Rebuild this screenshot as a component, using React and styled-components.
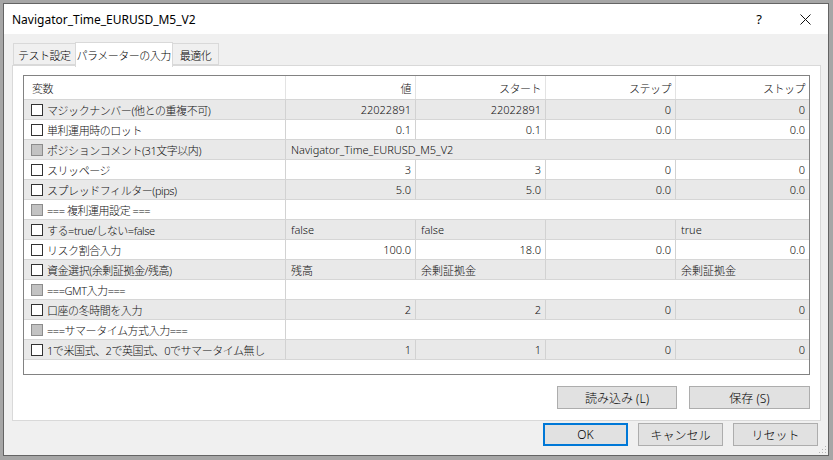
import React from 'react';
import styled, { createGlobalStyle } from 'styled-components';

const Global = createGlobalStyle`
  html, body {
    margin: 0;
    padding: 0;
    background: #a6a6a6;
  }
  body {
    padding: 3px 4px 4px 3px;
    font-family: "Noto Sans", "Noto Sans CJK JP", sans-serif;
    font-size: 12px;
    color: #000;
  }
`;

const Window = styled.div`
  position: relative;
  width: 826px;
  height: 453px;
  box-sizing: border-box;
  border: 1px solid #646464;
  background: #f0f0f0;
  display: flex;
  flex-direction: column;
`;

const TitleBar = styled.div`
  height: 30px;
  background: #fff;
  display: flex;
  align-items: center;
  padding-left: 8px;
`;

const Title = styled.div`
  flex: 1;
  font-size: 12px;
`;

const TitleButton = styled.div`
  width: 46px;
  height: 30px;
  display: flex;
  align-items: center;
  justify-content: center;
  font-size: 13px;
`;

const Body = styled.div`
  flex: 1;
  display: flex;
  flex-direction: column;
  padding: 8px 7px 10px 8px;
`;

const Tabs = styled.div`
  display: flex;
  align-items: flex-end;
  height: 23px;
  padding-left: 1px;
  position: relative;
  z-index: 1;
`;

const Tab = styled.div`
  box-sizing: border-box;
  height: ${p => (p.$active ? '25px' : '22px')};
  margin-bottom: ${p => (p.$active ? '-2px' : '0')};
  padding: 0 ${p => p.$pad}px;
  border: 1px solid #d9d9d9;
  border-bottom: ${p => (p.$active ? 'none' : '1px solid #d9d9d9')};
  margin-left: ${p => (p.$first ? '0' : '-1px')};
  background: ${p => (p.$active ? '#fff' : '#f0f0f0')};
  display: flex;
  align-items: center;
  padding-top: ${p => (p.$active ? '0' : '1px')};
  font-family: "Noto Sans CJK JP", sans-serif;
  font-weight: 300;
  font-size: 11px;
  letter-spacing: -0.5px;
  white-space: nowrap;
`;

const Panel = styled.div`
  box-sizing: border-box;
  height: 356px;
  background: #fff;
  border: 1px solid #d9d9d9;
  padding: 9px 10px 11px 10px;
  display: flex;
  flex-direction: column;
`;

const Grid = styled.div`
  box-sizing: border-box;
  height: 300px;
  border: 1px solid #828282;
  background: #fff;
`;

const Row = styled.div`
  display: grid;
  grid-template-columns: 262px 130px 130px 130px 1fr;
  height: ${p => (p.$head ? '24px' : '20px')};
  box-sizing: border-box;
  border-bottom: 1px solid #d6d6d6;
  background: ${p => (p.$shade ? '#e9e9e9' : '#fff')};
`;

const Cell = styled.div`
  box-sizing: border-box;
  display: flex;
  align-items: center;
  justify-content: ${p => (p.$right ? 'flex-end' : 'flex-start')};
  padding: 0 4px 0 5px;
  border-right: ${p => (p.$last ? 'none' : `1px solid ${p.$head ? '#e3e3e3' : '#d2d2d2'}`)};
  grid-column: ${p => p.$span || 'auto'};
  white-space: nowrap;
  overflow: hidden;
  font-family: "Noto Sans", "Noto Sans CJK JP", sans-serif;
  font-weight: 300;
  font-size: 11px;
  color: #111;
`;

const NameCell = styled(Cell)`
  padding-left: 7px;
  gap: 3px;
  letter-spacing: -0.45px;
`;

const HeadCell = styled(Cell)`
  padding-left: ${p => (p.$right ? '5px' : '8px')};
  letter-spacing: -0.5px;
`;

const Check = styled.span`
  width: 12px;
  height: 12px;
  box-sizing: border-box;
  border: 1px solid ${p => (p.$disabled ? '#8c8c8c' : '#333')};
  background: ${p => (p.$disabled ? '#c2c2c2' : '#fff')};
  flex: none;
  margin-right: 1px;
`;

const PanelButtons = styled.div`
  margin-top: auto;
  display: flex;
  justify-content: flex-end;
  gap: 12px;
`;

const Button = styled.button`
  box-sizing: border-box;
  width: ${p => p.$w || 85}px;
  height: 23px;
  background: #e1e1e1;
  border: ${p => (p.$default ? '2px solid #0078d7' : '1px solid #adadad')};
  font-family: "Noto Sans", "Noto Sans CJK JP", sans-serif;
  font-weight: 300;
  font-size: 12px;
  color: #000;
  padding: 0;
  display: flex;
  align-items: center;
  justify-content: center;
`;

const Footer = styled.div`
  display: flex;
  justify-content: flex-end;
  gap: 10px;
  margin-top: 2px;
  padding-right: 3px;
`;

const Grip = styled.svg`
  position: absolute;
  right: 1px;
  bottom: 1px;
`;

const rows = [
  { name: 'マジックナンバー(他との重複不可)', v: ['22022891', '22022891', '0', '0'] },
  { name: '単利運用時のロット', v: ['0.1', '0.1', '0.0', '0.0'] },
  { name: 'ポジションコメント(31文字以内)', span: 'Navigator_Time_EURUSD_M5_V2', disabled: true },
  { name: 'スリッページ', v: ['3', '3', '0', '0'] },
  { name: 'スプレッドフィルター(pips)', v: ['5.0', '5.0', '0.0', '0.0'] },
  { name: '=== 複利運用設定 ===', span: '', disabled: true },
  { name: 'する=true/しない=false', v: ['false', 'false', '', 'true'], text: true },
  { name: 'リスク割合入力', v: ['100.0', '18.0', '0.0', '0.0'] },
  { name: '資金選択(余剰証拠金/残高)', v: ['残高', '余剰証拠金', '', '余剰証拠金'], text: true },
  { name: '===GMT入力===', span: '', disabled: true },
  { name: '口座の冬時間を入力', v: ['2', '2', '0', '0'] },
  { name: '===サマータイム方式入力===', span: '', disabled: true },
  { name: '1で米国式、2で英国式、0でサマータイム無し', v: ['1', '1', '0', '0'] },
];

export default function App() {
  return (
    <>
      <Global />
      <Window>
        <TitleBar>
          <Title>Navigator_Time_EURUSD_M5_V2</Title>
          <TitleButton>?</TitleButton>
          <TitleButton>
            <svg width="11" height="11" viewBox="0 0 11 11">
              <path d="M0.5 0.5 L10.5 10.5 M10.5 0.5 L0.5 10.5" stroke="#111" strokeWidth="1" fill="none" />
            </svg>
          </TitleButton>
        </TitleBar>
        <Body>
          <Tabs>
            <Tab $first $pad={4}>テスト設定</Tab>
            <Tab $active $pad={1}>パラメーターの入力</Tab>
            <Tab $pad={7}>最適化</Tab>
          </Tabs>
          <Panel>
            <Grid>
              <Row $head>
                <HeadCell $head>変数</HeadCell>
                <HeadCell $head $right>値</HeadCell>
                <HeadCell $head $right>スタート</HeadCell>
                <HeadCell $head $right>ステップ</HeadCell>
                <HeadCell $head $right $last>ストップ</HeadCell>
              </Row>
              {rows.map((r, i) => (
                <Row key={i} $shade={i % 2 === 0}>
                  <NameCell>
                    <Check $disabled={r.disabled} />
                    {r.name}
                  </NameCell>
                  {r.v ? (
                    r.v.map((x, j) => (
                      <Cell key={j} $right={!r.text} $last={j === 3}>{x}</Cell>
                    ))
                  ) : (
                    <Cell $span="2 / 6" $last>{r.span}</Cell>
                  )}
                </Row>
              ))}
            </Grid>
            <PanelButtons>
              <Button $w={120}>読み込み (L)</Button>
              <Button $w={121}>保存 (S)</Button>
            </PanelButtons>
          </Panel>
          <Footer>
            <Button $default>OK</Button>
            <Button>キャンセル</Button>
            <Button>リセット</Button>
          </Footer>
        </Body>
        <Grip width="8" height="8" viewBox="0 0 8 8">
          <rect x="6" y="0" width="1" height="1" fill="#b5b5b5" />
          <rect x="3" y="3" width="1" height="1" fill="#b5b5b5" />
          <rect x="6" y="3" width="1" height="1" fill="#b5b5b5" />
          <rect x="0" y="6" width="1" height="1" fill="#b5b5b5" />
          <rect x="3" y="6" width="1" height="1" fill="#b5b5b5" />
          <rect x="6" y="6" width="1" height="1" fill="#b5b5b5" />
        </Grip>
      </Window>
    </>
  );
}
